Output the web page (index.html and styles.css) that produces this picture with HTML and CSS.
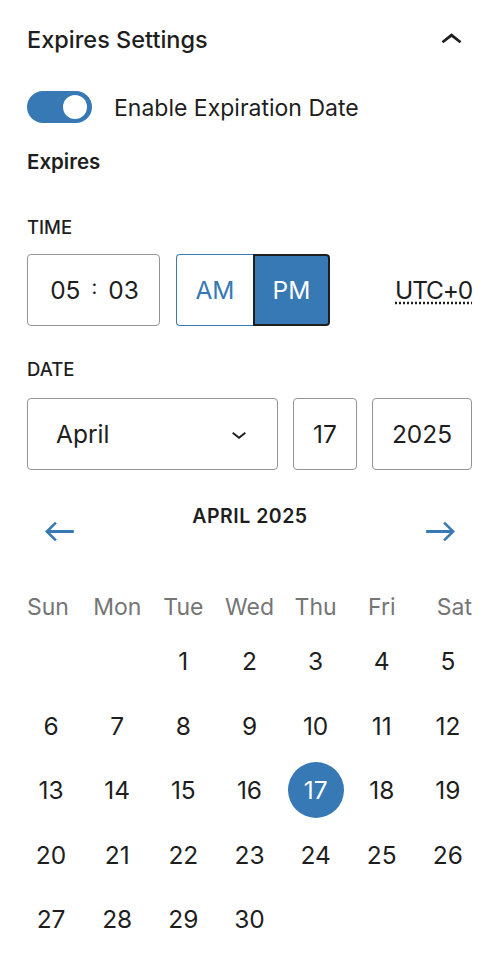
FILE: index.html
```html
<!DOCTYPE html>
<html lang="en">
<head>
<meta charset="UTF-8">
<meta name="viewport" content="width=device-width, initial-scale=1.0">
<title>Expires Settings</title>
<link rel="stylesheet" href="styles.css">
</head>
<body>
    <div class="panel">
        <div class="panel-head">
            <h2 class="panel-title">Expires Settings</h2>
            <svg class="head-icon" viewBox="0 0 24 24" width="43" height="43"><path d="M6.5 12.4L12 8l5.5 4.4-.9 1.2L12 10l-4.6 3.6-.9-1.2z"/></svg>
        </div>

        <div class="toggle-row">
            <span class="toggle is-on"><span class="toggle-knob"></span></span>
            <label class="toggle-label">Enable Expiration Date</label>
        </div>

        <div class="field-title">Expires</div>

        <div class="legend">Time</div>
        <div class="time-row">
            <div class="time-box">
                <span class="time-num">05</span>
                <span class="time-sep">:</span>
                <span class="time-num">03</span>
            </div>
            <div class="ampm">
                <button class="ampm-btn">AM</button>
                <button class="ampm-btn is-pressed">PM</button>
            </div>
            <abbr class="timezone" title="Coordinated Universal Time">UTC+0</abbr>
        </div>

        <div class="legend legend-date">Date</div>
        <div class="date-row">
            <div class="input-box month-select">
                <span>April</span>
                <svg viewBox="0 0 24 24" width="30" height="30"><path d="M17.5 11.6L12 16l-5.5-4.4.9-1.2L12 14l4.6-3.6 1 1.2z"/></svg>
            </div>
            <div class="input-box day-input">17</div>
            <div class="input-box year-input">2025</div>
        </div>

        <div class="cal-nav">
            <button class="nav-btn">
                <svg viewBox="0 0 24 24" width="43" height="43"><path d="M20 11.2H6.8l3.7-3.7-1-1L3.9 12l5.6 5.5 1-1-3.7-3.7H20z"/></svg>
            </button>
            <div class="cal-title"><strong>April</strong> 2025</div>
            <button class="nav-btn">
                <svg viewBox="0 0 24 24" width="43" height="43"><path d="m14.5 6.5-1 1 3.7 3.7H4v1.6h13.2l-3.7 3.7 1 1 5.6-5.5z"/></svg>
            </button>
        </div>

        <div class="cal-grid cal-week">
            <div class="dow">Sun</div>
            <div class="dow">Mon</div>
            <div class="dow">Tue</div>
            <div class="dow">Wed</div>
            <div class="dow">Thu</div>
            <div class="dow">Fri</div>
            <div class="dow">Sat</div>
        </div>

        <div class="cal-grid cal-days">
            <span class="day day-empty"></span>
            <span class="day day-empty"></span>
            <span class="day">1</span>
            <span class="day">2</span>
            <span class="day">3</span>
            <span class="day">4</span>
            <span class="day">5</span>
            <span class="day">6</span>
            <span class="day">7</span>
            <span class="day">8</span>
            <span class="day">9</span>
            <span class="day">10</span>
            <span class="day">11</span>
            <span class="day">12</span>
            <span class="day">13</span>
            <span class="day">14</span>
            <span class="day">15</span>
            <span class="day">16</span>
            <span class="day is-selected">17</span>
            <span class="day">18</span>
            <span class="day">19</span>
            <span class="day">20</span>
            <span class="day">21</span>
            <span class="day">22</span>
            <span class="day">23</span>
            <span class="day">24</span>
            <span class="day">25</span>
            <span class="day">26</span>
            <span class="day">27</span>
            <span class="day">28</span>
            <span class="day">29</span>
            <span class="day">30</span>
        </div>
    </div>
</body>
</html>
```

FILE: styles.css
```css
body {
    margin: 0;
    background-color: #fff;
    color: #1e1e1e;
    font-family: Inter, "Noto Sans", sans-serif;
}
.panel {
    padding: 26px 30px 0 27px;
}
.panel-head {
    display: flex;
    align-items: center;
    justify-content: space-between;
    height: 28px;
}
.panel-title {
    margin: 0;
    font-size: 23.5px;
    line-height: 28px;
    font-weight: 500;
}
.head-icon {
    margin-right: -1px;
    fill: #1e1e1e;
}
.toggle-row {
    display: flex;
    align-items: center;
    margin-top: 37px;
}
.toggle {
    position: relative;
    width: 65px;
    height: 32px;
    border-radius: 16px;
    background-color: #3779b5;
}
.toggle-knob {
    position: absolute;
    top: 4px;
    right: 5px;
    width: 24px;
    height: 24px;
    border-radius: 50%;
    background-color: #fff;
}
.toggle-label {
    margin-left: 22px;
    padding-top: 2px;
    font-size: 23px;
    line-height: 28px;
}
.field-title {
    margin-top: 26px;
    font-size: 20.5px;
    line-height: 26px;
    font-weight: 600;
}
.legend {
    margin-top: 41px;
    font-size: 18.5px;
    line-height: 22px;
    font-weight: 500;
    text-transform: uppercase;
}
.legend-date {
    margin-top: 32px;
}
.time-row {
    display: flex;
    align-items: center;
    margin-top: 16px;
    font-size: 24.5px;
}
.time-box {
    display: flex;
    align-items: center;
    justify-content: center;
    gap: 11px;
    box-sizing: border-box;
    width: 133px;
    height: 72px;
    padding-left: 2px;
    border: 1px solid #949494;
    border-radius: 4px;
}
.time-sep {
    position: relative;
    top: -3px;
    font-size: 20px;
}
.ampm {
    display: flex;
    margin-left: 16px;
}
.ampm-btn {
    box-sizing: border-box;
    width: 77px;
    height: 72px;
    padding: 0;
    font-family: inherit;
    font-size: 24.5px;
    color: #3779b5;
    background-color: #fff;
    border: 1.5px solid #3779b5;
    border-right: none;
    border-radius: 4px 0 0 4px;
}
.ampm-btn.is-pressed {
    color: #fff;
    background-color: #3779b5;
    border: 2px solid #1e1e1e;
    border-radius: 0 4px 4px 0;
}
.timezone {
    margin-left: auto;
    letter-spacing: -1.2px;
    text-decoration: underline dotted;
    text-underline-offset: 3px;
}
.date-row {
    display: flex;
    gap: 15px;
    margin-top: 18px;
    font-size: 24.5px;
}
.input-box {
    display: flex;
    align-items: center;
    justify-content: center;
    box-sizing: border-box;
    height: 72px;
    border: 1px solid #949494;
    border-radius: 4px;
}
.month-select {
    flex: 1;
    justify-content: space-between;
    padding: 0 23px 0 28px;
}
.month-select svg {
    fill: #1e1e1e;
}
.day-input {
    width: 64px;
}
.year-input {
    width: 100px;
}
.cal-nav {
    display: flex;
    align-items: flex-start;
    justify-content: space-between;
    margin-top: 34px;
    padding: 0 10px 0 11px;
}
.nav-btn {
    margin-top: 6px;
    padding: 0;
    border: none;
    background: none;
    line-height: 0;
}
.nav-btn svg {
    fill: #3779b5;
}
.cal-title {
    font-size: 19.5px;
    line-height: 24px;
    font-weight: 600;
    text-transform: uppercase;
    letter-spacing: 0.5px;
}
.cal-title strong {
    font-weight: 600;
}
.cal-grid {
    display: grid;
    grid-template-columns: repeat(7, 1fr);
    margin: 0 -9px;
}
.cal-week {
    margin-top: 40px;
}
.dow {
    font-size: 23px;
    line-height: 28px;
    color: #757575;
    text-align: center;
}
.dow:first-child {
    padding-left: 9px;
    text-align: left;
}
.dow:last-child {
    padding-right: 9px;
    text-align: right;
}
.cal-days {
    row-gap: 8.5px;
    margin-top: 12px;
}
.day {
    display: flex;
    align-items: center;
    justify-content: center;
    justify-self: center;
    width: 56px;
    height: 56px;
    border-radius: 50%;
    font-size: 24.5px;
}
.day.is-selected {
    color: #fff;
    background-color: #3779b5;
}
```
